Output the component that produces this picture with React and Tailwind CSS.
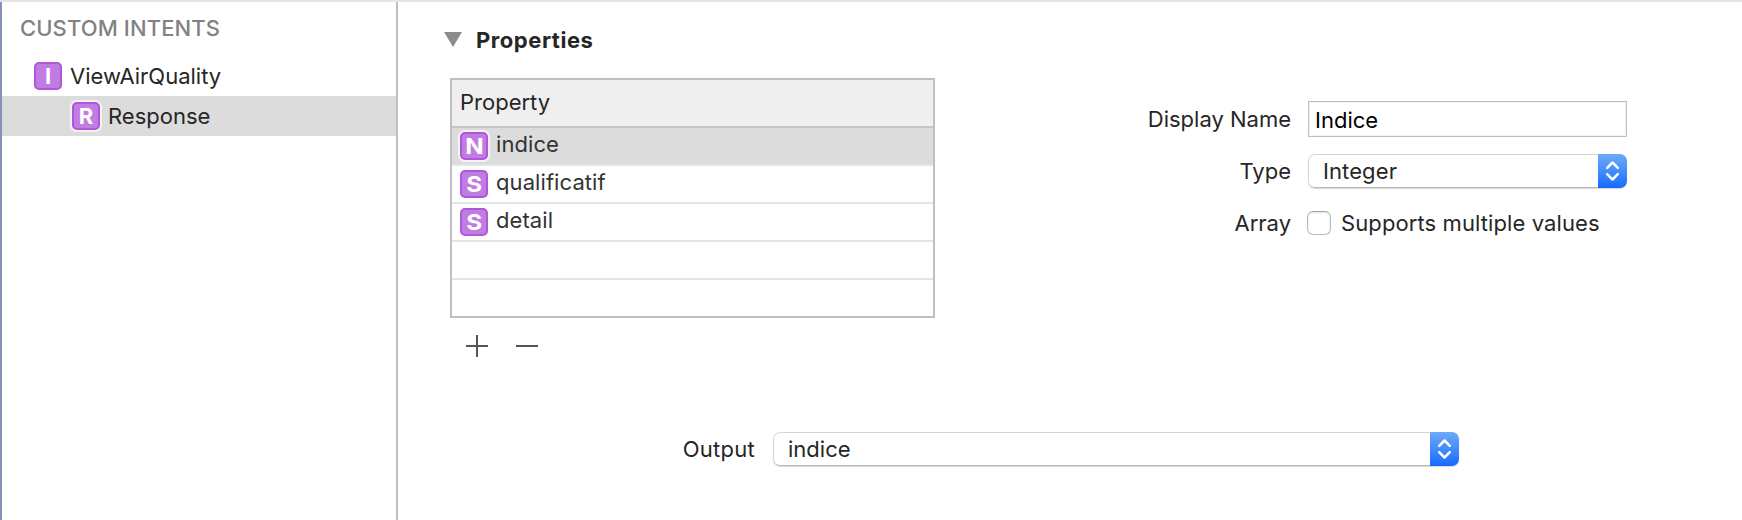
function Badge({ letter, selected, wide, className = "" }) {
  return (
    <span
      className={`flex size-7 shrink-0 items-center justify-center rounded-[5px] border-2 border-[#af56dc] bg-[#c17ce3] text-[22px] leading-6 font-bold text-white ${selected ? "shadow-[0_0_0_2px_#f4f4f4]" : ""} ${className}`}
    >
      <span className={wide ? "inline-block scale-x-110" : "inline-block"}>{letter}</span>
    </span>
  );
}

function SidebarItem({ letter, label, selected, indent }) {
  return (
    <div className={`flex h-10 items-center gap-2 ${indent} ${selected ? "bg-[#dcdcdc]" : ""}`}>
      <Badge letter={letter} selected={selected} />
      <span className="leading-8">{label}</span>
    </div>
  );
}

function PropertyRow({ letter, label, selected }) {
  return (
    <div
      className={`flex h-[38px] border-b-2 border-[#e5e5e5] pl-2 last:h-9 last:border-b-0 ${selected ? "bg-[#dcdcdc]" : ""}`}
    >
      {label && (
        <>
          <Badge letter={letter} selected={selected} wide className="mt-1" />
          <span className="ml-2 h-8 leading-8 tracking-[0.08px] text-[#333]">{label}</span>
        </>
      )}
    </div>
  );
}

function Select({ value, className, textClass = "pl-[14px]" }) {
  return (
    <div
      className={`flex h-[34px] items-stretch overflow-hidden rounded-[7px] shadow-[0_1px_1px_rgba(0,0,0,0.16)] ${className}`}
    >
      <div className={`flex flex-1 rounded-l-[7px] border border-r-0 border-t-[#d4d4d4] border-l-[#d4d4d4] border-b-[#b8b8b8] bg-white ${textClass}`}>
        <span className="leading-8">{value}</span>
      </div>
      <div className="flex w-[29px] items-center justify-center bg-linear-to-b from-[#6caaf8] to-[#116aff]">
        <svg width="29" height="34" viewBox="0 0 29 34" fill="none" stroke="white" strokeWidth="2.5" strokeLinecap="round" strokeLinejoin="round">
          <path d="M9.2 13.8 L14.5 8.5 L19.8 13.8 M9.2 20.2 L14.5 25.5 L19.8 20.2" />
        </svg>
      </div>
    </div>
  );
}

function Label({ children, className = "" }) {
  return <span className={`text-right leading-8 whitespace-nowrap ${className}`}>{children}</span>;
}

export default function App() {
  return (
    <div className="flex h-[520px] w-[1742px] overflow-hidden border-t-2 border-[#e5e5e5] bg-white font-['Inter',sans-serif] text-[22px] text-[#262626]">
      <aside className="w-[398px] shrink-0 border-r-2 border-l-2 border-r-[#c0c0c0] border-l-[#8791b8]">
        <h2 className="flex h-[54px] pt-[10px] pl-[18px] leading-8 font-medium tracking-[0.1px] text-[#828282]">
          CUSTOM INTENTS
        </h2>
        <SidebarItem letter="I" label="ViewAirQuality" indent="pl-8" />
        <SidebarItem letter="R" label="Response" selected indent="pl-[70px]" />
      </aside>

      <main className="flex-1 pl-[46px]">
        <div className="flex h-[76px] pt-[22px]">
          <svg className="mt-2 shrink-0" width="18" height="15" viewBox="0 0 18 15">
            <path d="M0 0 H18 L9 15 Z" fill="#8c8c8c" />
          </svg>
          <h3 className="ml-[14px] leading-8 font-bold tracking-[0.55px]">Properties</h3>
        </div>

        <div className="flex h-[354px] items-start pl-[6px]">
          <section>
            <div className="w-[485px] border-2 border-[#c0c0c0] bg-white">
              <div className="h-12 border-b-2 border-[#c6c6c6] bg-[#efefef] pt-[6px] pl-2">
                <span className="leading-8">Property</span>
              </div>
              <PropertyRow letter="N" label="indice" selected />
              <PropertyRow letter="S" label="qualificatif" />
              <PropertyRow letter="S" label="detail" />
              <PropertyRow />
              <PropertyRow />
            </div>
            <div className="flex gap-7 pt-[17px] pl-4">
              <svg width="22" height="22" viewBox="0 0 22 22" stroke="#555" strokeWidth="2">
                <path d="M0 11 H22 M11 0 V22" />
              </svg>
              <svg width="22" height="22" viewBox="0 0 22 22" stroke="#555" strokeWidth="2">
                <path d="M0 11 H22" />
              </svg>
            </div>
          </section>

          <section className="ml-[200px] grid grid-cols-[156px_319px] grid-rows-[36px_34px_32px] gap-x-[17px] gap-y-[17px] pt-[23px]">
            <Label className="pt-[2px]">Display Name</Label>
            <div className="h-9 border border-[#bdbdbd] bg-white pt-[2px] pl-[6px] text-black shadow-[inset_0_0_0_1px_#f3f3f3]">
              <span className="leading-8">Indice</span>
            </div>
            <Label className="pt-px">Type</Label>
            <Select value="Integer" className="w-[319px]" textClass="pl-[14px] tracking-[0.1px]" />
            <Label className="pt-[2px]">Array</Label>
            <div className="-ml-px flex pt-[2px]">
              <span className="mt-1 size-6 shrink-0 rounded-[6px] border border-[#b9b9b9] border-t-[#a5a5a5] bg-white shadow-[inset_0_1px_2px_rgba(0,0,0,0.12)]" />
              <span className="ml-[10px] leading-8 tracking-[0.1px] whitespace-nowrap">Supports multiple values</span>
            </div>
          </section>
        </div>

        <div className="flex">
          <Label className="w-[311px] pt-px tracking-[0.25px]">Output</Label>
          <Select value="indice" className="ml-[18px] w-[686px]" />
        </div>
      </main>
    </div>
  );
}
